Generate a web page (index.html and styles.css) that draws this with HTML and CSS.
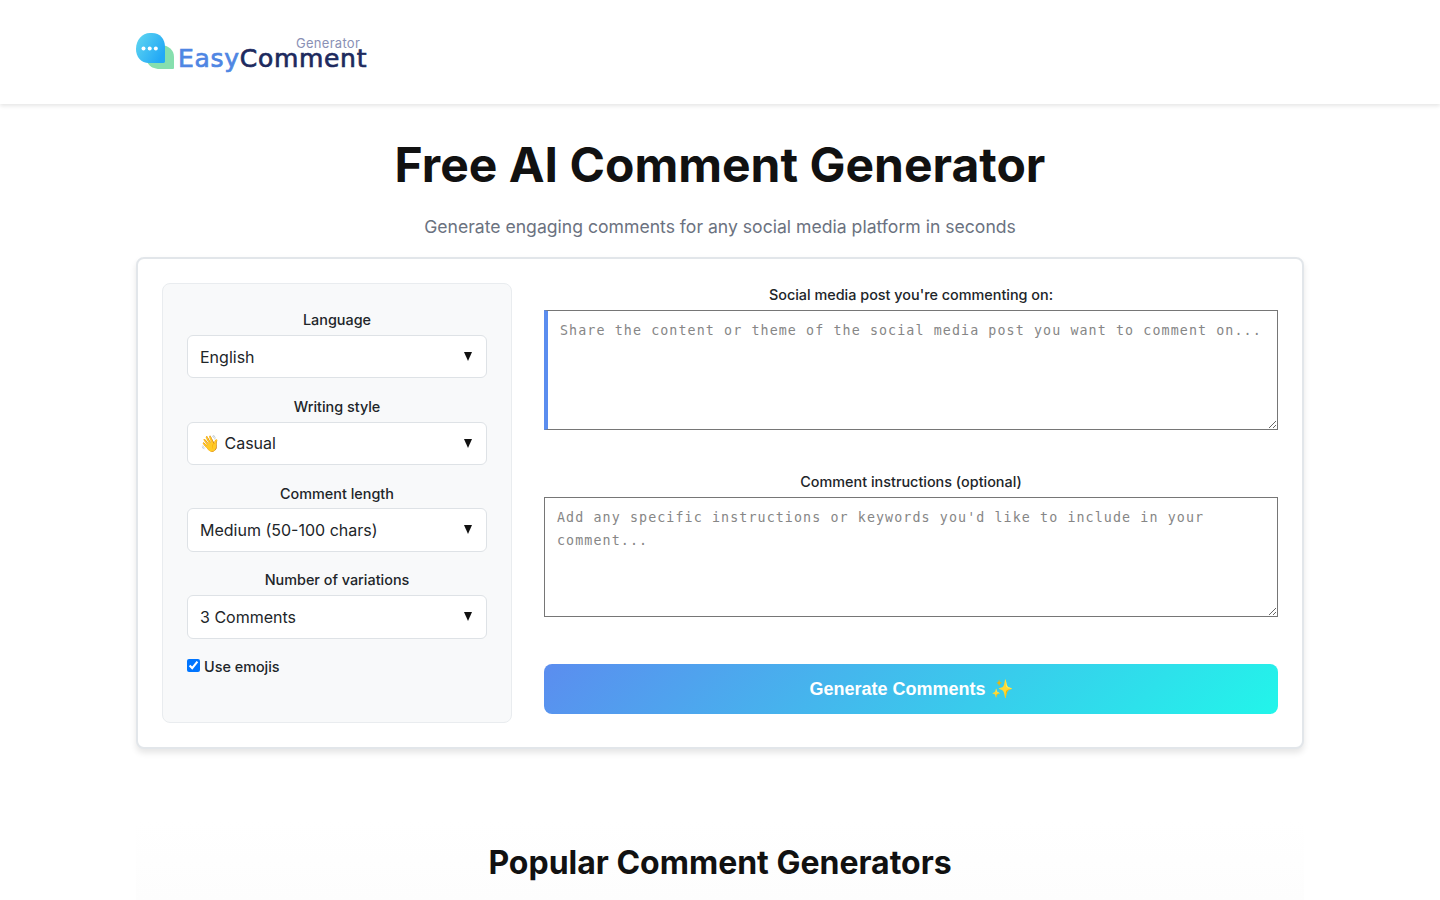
FILE: index.html
```html
<!DOCTYPE html>
<html lang="en">
<head>
    <meta charset="UTF-8">
    <meta name="viewport" content="width=device-width, initial-scale=1.0">
    <title>Free AI Comment Generator</title>
    <link rel="stylesheet" href="styles.css">
</head>
<body>
    <header class="site-header">
        <div class="container">
            <a class="logo" href="#">
                <svg class="logo-mark" width="41" height="40" viewBox="0 0 41 40">
                    <defs>
                        <linearGradient id="bubbleBlue" x1="0" y1="0" x2="1" y2="0.6">
                            <stop offset="0" stop-color="#62d8f0"/>
                            <stop offset="1" stop-color="#22a8f6"/>
                        </linearGradient>
                    </defs>
                    <path d="M28 13c7 1 12 5 12 12v11c0 1-1 1-2 1H26c-6 0-10-2-13-7z" fill="#86dfae"/>
                    <path d="M16 1h2c8 0 13 6 13 14v14c0 2-1 2-3 2H15C7 31 2 25 2 17 2 8 8 1 16 1z" fill="url(#bubbleBlue)"/>
                    <circle cx="9.500" cy="16.500" r="2" fill="#fff"/>
                    <circle cx="15.700" cy="16.500" r="2" fill="#fff"/>
                    <circle cx="21.800" cy="16.500" r="2" fill="#fff"/>
                </svg>
                <span class="logo-text">
                    <span class="logo-small">Generator</span>
                    <span class="logo-name"><span class="logo-easy">Easy</span>Comment</span>
                </span>
            </a>
        </div>
    </header>

    <main class="container">
        <h1>Free AI Comment Generator</h1>
        <p class="subtitle">Generate engaging comments for any social media platform in seconds</p>

        <section class="tool-card">
            <aside class="options">
                <div class="field">
                    <label for="language">Language</label>
                    <div class="select-wrap">
                        <select id="language"><option>English</option></select>
                    </div>
                </div>
                <div class="field">
                    <label for="style">Writing style</label>
                    <div class="select-wrap">
                        <select id="style"><option>👋 Casual</option></select>
                    </div>
                </div>
                <div class="field">
                    <label for="length">Comment length</label>
                    <div class="select-wrap">
                        <select id="length"><option>Medium (50-100 chars)</option></select>
                    </div>
                </div>
                <div class="field">
                    <label for="count">Number of variations</label>
                    <div class="select-wrap">
                        <select id="count"><option>3 Comments</option></select>
                    </div>
                </div>
                <label class="check"><input type="checkbox" checked> Use emojis</label>
            </aside>

            <div class="compose">
                <div class="text-field">
                    <label for="post">Social media post you're commenting on:</label>
                    <textarea id="post" class="accent" placeholder="Share the content or theme of the social media post you want to comment on..."></textarea>
                </div>
                <div class="text-field">
                    <label for="notes">Comment instructions (optional)</label>
                    <textarea id="notes" placeholder="Add any specific instructions or keywords you'd like to include in your comment..."></textarea>
                </div>
                <button class="generate" type="button">Generate Comments ✨</button>
            </div>
        </section>

        <section class="popular">
            <h2>Popular Comment Generators</h2>
        </section>
    </main>
</body>
</html>
```

FILE: styles.css
```css
* {
    box-sizing: border-box;
}

body {
    margin: 0;
    font-family: 'Inter', 'Liberation Sans', sans-serif;
    color: #111;
    background-color: #fff;
}

.container {
    width: 1168px;
    margin: 0 auto;
}

.site-header {
    height: 104px;
    background-color: #fff;
    box-shadow: 0 2px 4px rgba(0, 0, 0, 0.1);
    position: relative;
}

.logo {
    display: inline-flex;
    align-items: flex-start;
    margin-left: -2px;
    padding-top: 32px;
    text-decoration: none;
}

.logo-mark {
    flex: none;
}

.logo-text {
    display: flex;
    flex-direction: column;
    margin-left: 3px;
}

.logo-small {
    align-self: flex-end;
    margin: 6px 7px 0 0;
    font-size: 13px;
    line-height: 10px;
    letter-spacing: 0.3px;
    color: #8a90b5;
}

.logo-name {
    margin-top: 1px;
    font-family: 'DejaVu Sans', sans-serif;
    font-size: 25px;
    line-height: 20px;
    letter-spacing: 0.7px;
    -webkit-text-stroke: 0.7px currentColor;
    color: #1d2a5e;
}

.logo-easy {
    color: #4f86e3;
}

h1 {
    margin: 30px 0 0;
    font-size: 48px;
    line-height: 62px;
    font-weight: 700;
    text-align: center;
    color: #111;
}

.subtitle {
    margin: 16px 0 0;
    font-size: 17.6px;
    line-height: 29px;
    text-align: center;
    color: #6b7280;
}

.tool-card {
    display: flex;
    gap: 32px;
    height: 492px;
    margin-top: 16px;
    padding: 24px;
    background-color: #fff;
    border: 2px solid #e2e6ea;
    border-radius: 8px;
    box-shadow: 0 4px 6px rgba(0, 0, 0, 0.1);
}

.options {
    flex: none;
    width: 350px;
    padding: 27.4px 24px 24px;
    background-color: #f8f9fa;
    border: 1px solid #e9ecef;
    border-radius: 8px;
}

.field {
    margin-bottom: 19.6px;
}

.field label,
.text-field label {
    display: block;
    margin-bottom: 6px;
    font-size: 14.4px;
    line-height: 17.5px;
    font-weight: 500;
    text-align: center;
    color: #212529;
}

.select-wrap {
    position: relative;
}

/* dropdown arrow */
.select-wrap::after {
    content: "";
    position: absolute;
    top: 17px;
    right: 15px;
    border-left: 4.5px solid transparent;
    border-right: 4.5px solid transparent;
    border-top: 9px solid #111;
    pointer-events: none;
}

select {
    display: block;
    width: 100%;
    height: 43.6px;
    padding: 0 12px;
    font-family: inherit;
    font-size: 16px;
    color: #212529;
    background-color: #fff;
    border: 1px solid #dee2e6;
    border-radius: 6px;
    appearance: none;
}

.check {
    display: flex;
    align-items: center;
    margin-top: 19px;
    font-size: 14.4px;
    line-height: 17px;
    font-weight: 500;
    color: #212529;
}

.check input {
    width: 13px;
    height: 13px;
    margin: 0 4px 2px 0;
}

.compose {
    flex: 1;
    display: flex;
    flex-direction: column;
    padding-top: 3px;
}

.text-field {
    margin-bottom: 43.5px;
}

textarea {
    display: block;
    width: 100%;
    height: 120px;
    padding: 8px 12px;
    font-family: 'DejaVu Sans Mono', monospace;
    font-size: 13.33px;
    line-height: 23px;
    letter-spacing: 1.09px;
    color: #212529;
    background-color: #fff;
    border: 1px solid #767676;
    border-radius: 0;
}

textarea.accent {
    border-left: 4px solid #5b8def;
}

textarea::placeholder {
    color: #868686;
}

.generate {
    height: 50px;
    margin-top: 4px;
    font-family: 'Liberation Sans', sans-serif;
    font-size: 18px;
    font-weight: 700;
    color: #fff;
    background: linear-gradient(135deg, #5b8def, #22f5ea);
    border: none;
    border-radius: 8px;
    cursor: pointer;
}

.popular {
    height: 79px;
    margin-top: 72px;
    padding-top: 22px;
    background: linear-gradient(#fff, #fdfdfd);
}

h2 {
    margin: 0;
    font-size: 32px;
    line-height: 40px;
    font-weight: 700;
    text-align: center;
    color: #111;
}
```
